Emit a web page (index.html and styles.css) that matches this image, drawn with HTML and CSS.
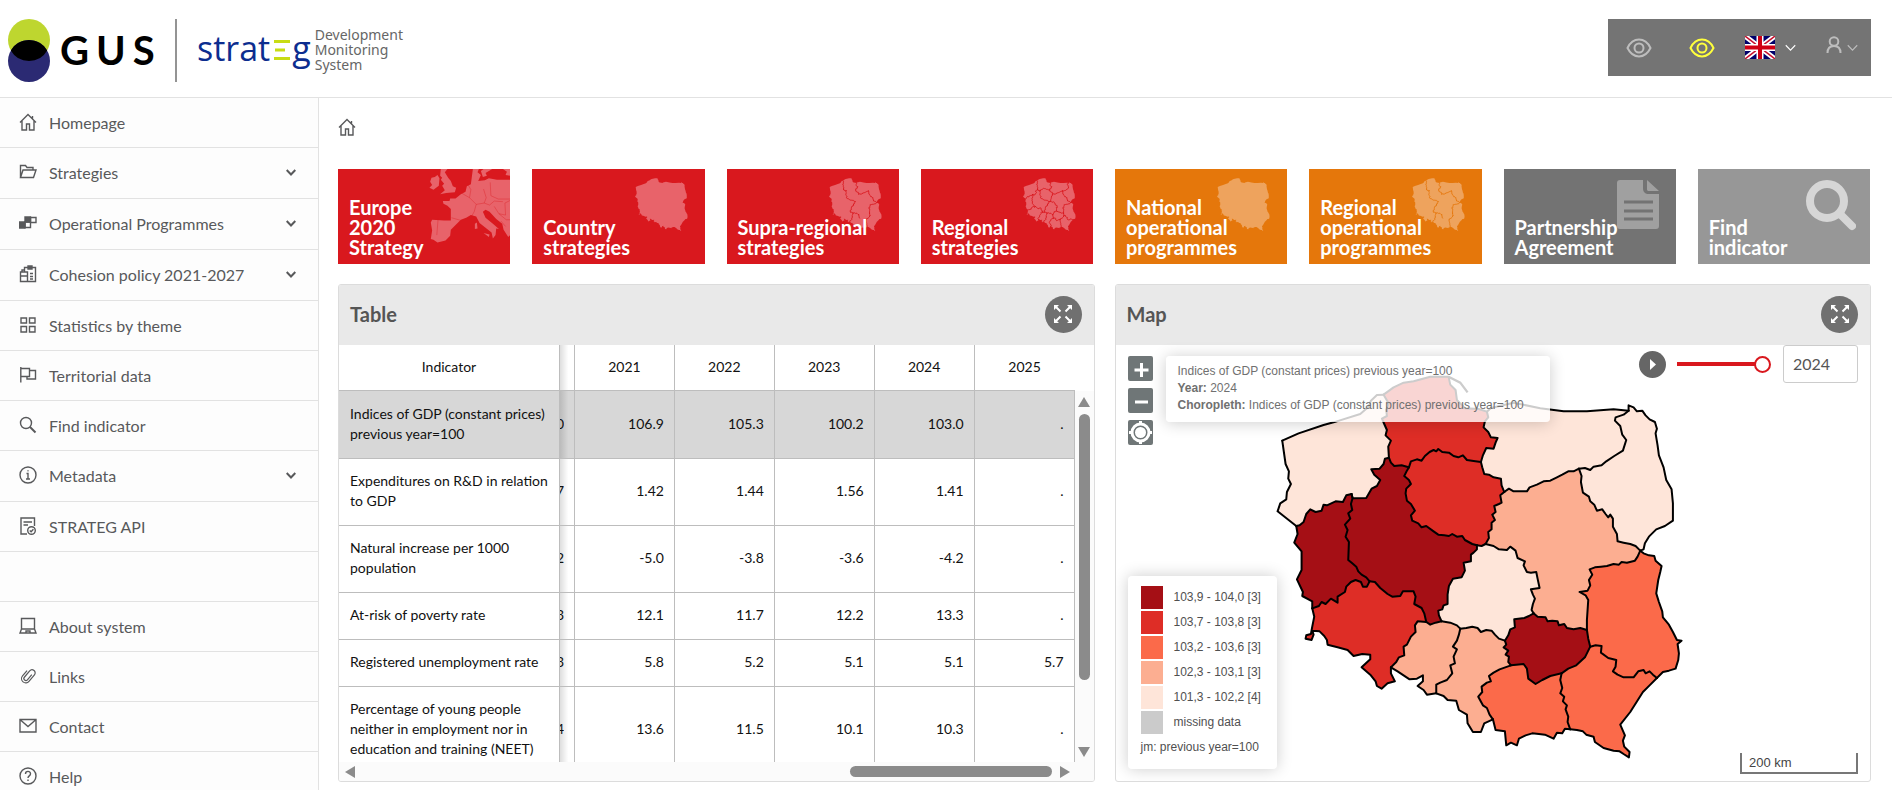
FILE: index.html
```html
<!DOCTYPE html>
<html lang="en">
<head>
<meta charset="utf-8">
<title>STRATEG</title>
<link rel="stylesheet" href="styles.css">
</head>
<body>
<svg class="defs" aria-hidden="true">
  <symbol id="i-home" viewBox="0 0 18 18"><path d="M1 9.500 9 1.500l8 8M3 8v9h4.500v-6h3v6H15V8M13.500 3v3"/></symbol>
  <symbol id="i-chev" viewBox="0 0 10 7"><path d="m.7 1 4.300 4.500L9.300 1"/></symbol>
  <symbol id="i-eye" viewBox="0 0 26 20"><path d="M1.500 10C7-1.200 19-1.200 24.500 10 19 21.200 7 21.200 1.500 10z"/><circle cx="13" cy="10" r="4.500"/></symbol>
  <symbol id="i-expand" viewBox="0 0 20 20"><path d="m2 2 5.500 5.500M18 2l-5.500 5.500M2 18l5.500-5.500M18 18l-5.500-5.500"/><path class="tip" d="M1 1h5L1 6zM19 1v5l-5-5zM1 19v-5l5 5zM19 19h-5l5-5z"/></symbol>
</svg>
<div class="app">
  <header class="header">
    <a class="brand" href="#">
      <svg class="brand-mark" viewBox="0 0 42 64" role="img" aria-label="GUS">
        <circle cx="21" cy="21" r="21" fill="#bed62f"/><circle cx="21" cy="42" r="21" fill="#2b2a73"/>
        <path d="M2.800 31.500a21 21 0 0 1 36.400 0 21 21 0 0 1-36.400 0z" fill="#000"/>
      </svg>
      <span class="gus"><span>G</span><span>U</span><span>S</span></span>
      <span class="brand-line"></span>
      <span class="strateg">strat<svg class="bars" viewBox="0 0 16 20" aria-hidden="true"><path d="M0 1.500h16M1 10h10M0 18.500h16" stroke="#c8dc14" stroke-width="3"/></svg>g</span>
      <span class="tagline">Development<br>Monitoring<br>System</span>
    </a>
    <div class="tools">
      <button class="tool" aria-label="Standard view"><svg class="eye"><use href="#i-eye"/></svg></button>
      <button class="tool tool-contrast" aria-label="High contrast"><svg class="eye"><use href="#i-eye"/></svg></button>
      <button class="tool tool-lang" aria-label="Language">
        <svg class="flag" viewBox="0 0 30 23"><path fill="#00006b" d="M0 0h30v23H0z"/><path d="m0 0 30 23M30 0 0 23" stroke="#fff" stroke-width="5"/><path d="m0 0 30 23M30 0 0 23" stroke="#c8102e" stroke-width="1.500"/><path d="M15 0v23M0 11.500h30" stroke="#fff" stroke-width="7"/><path d="M15 0v23M0 11.500h30" stroke="#d00014" stroke-width="4"/></svg>
        <svg class="chev-thin"><use href="#i-chev"/></svg>
      </button>
      <button class="tool tool-user" aria-label="Account">
        <svg class="user" viewBox="0 0 16 18"><circle cx="8" cy="5.500" r="4.300"/><path d="M1.500 17c0-4.500 2.500-7 6.500-7s6.500 2.500 6.500 7"/></svg>
        <svg class="chev-thin"><use href="#i-chev"/></svg>
      </button>
    </div>
  </header>
  <div class="body">
    <nav class="sidebar">
      <a class="item" href="#"><svg class="ico"><use href="#i-home"/></svg><span>Homepage</span></a>
      <a class="item item-sub" href="#"><svg class="ico" viewBox="0 0 18 18"><path d="M1.500 14.500v-12h5l1.500 2h6v2.500M1.500 14.500l2.500-7.500h13l-2.500 7.500z"/></svg><span>Strategies</span><svg class="chev"><use href="#i-chev"/></svg></a>
      <a class="item item-sub" href="#"><svg class="ico" viewBox="0 0 18 18"><path fill="currentColor" d="M.500 8h5.500v6H.500zM6 3h5.500v5H6z"/><path d="M11.500 3.500h5.500v5h-5.500zM6 8h5.500v5.500H6z"/></svg><span>Operational Programmes</span><svg class="chev"><use href="#i-chev"/></svg></a>
      <a class="item item-sub" href="#"><svg class="ico" viewBox="0 0 18 18"><path d="M5.500 7V2.500h11v14H1.500V7h7v9.500M1.500 11h7M9 4h4V1H9zM3 7V5h2.500M11 8.500h3M11 11.500h3M11 14h3"/></svg><span>Cohesion policy 2021-2027</span><svg class="chev"><use href="#i-chev"/></svg></a>
      <a class="item" href="#"><svg class="ico" viewBox="0 0 18 18"><path d="M2 2h5.500v5H2zM10.500 2H16v5h-5.500zM2 10.500h5.500v5.500H2zM10.500 10.500H16v5.500h-5.500z"/></svg><span>Statistics by theme</span></a>
      <a class="item" href="#"><svg class="ico" viewBox="0 0 18 18"><path d="M1.800 1v15.500M1.800 2.500h8.700v8H1.800M10.500 4.500h6v8.500H8v-2.500"/></svg><span>Territorial data</span></a>
      <a class="item" href="#"><svg class="ico" viewBox="0 0 18 18"><circle cx="7" cy="7" r="5.500"/><path d="m11 11 5.500 5.500" stroke-width="2"/></svg><span>Find indicator</span></a>
      <a class="item item-sub" href="#"><svg class="ico" viewBox="0 0 18 18"><circle cx="9" cy="9" r="8"/><path d="M7.500 7.500H9V13M7 13h4M8.500 4.800h1"/></svg><span>Metadata</span><svg class="chev"><use href="#i-chev"/></svg></a>
      <a class="item" href="#"><svg class="ico" viewBox="0 0 18 18"><path d="M8 17H2V1h13.500v8M4.500 5H13M4.500 8H9"/><circle cx="12.500" cy="13.500" r="3.800"/><path d="m10.800 13.500 1.300 1.300 2.300-2.500"/></svg><span>STRATEG API</span></a>
      <div class="item item-gap"></div>
      <a class="item" href="#"><svg class="ico" viewBox="0 0 18 18"><path d="M2.500 12.500v-11h13v11M2.500 12 1 16h16l-1.500-4zM7 16v-2h4v2"/></svg><span>About system</span></a>
      <a class="item" href="#"><svg class="ico" viewBox="0 0 18 18"><g transform="rotate(40 9 9)" stroke-width="1.200"><path d="M4.800 5.500v7a4.200 4.200 0 0 0 8.400 0V4a3.100 3.100 0 0 0-6.200 0v8.300a2 2 0 0 0 4 0V5.500"/></g></svg><span>Links</span></a>
      <a class="item" href="#"><svg class="ico" viewBox="0 0 18 18"><path d="M1 2.500h16v12.500H1zM1.500 3 9 9.500 16.500 3"/></svg><span>Contact</span></a>
      <a class="item" href="#"><svg class="ico" viewBox="0 0 18 18"><circle cx="9" cy="9" r="8"/><path d="M6.500 7c0-3.500 5-3.300 5-.300C11.500 9 9 8.700 9 11M9 12.500V14"/></svg><span>Help</span></a>
    </nav>
    <main class="main">
      <a class="crumb" href="#" aria-label="Homepage"><svg class="ico"><use href="#i-home"/></svg></a>
      <div class="tiles">
        <a class="tile red" href="#">
          <svg class="art art-full" viewBox="0 0 516 285" preserveAspectRatio="xMaxYMin slice">
            <g fill="#e8636a"><path d="M280 26l10-2 8-6 6 10-2 22-16 12-12-6 8-8-6-10zM308 0h20l-8 10 10 16 8 10 6 16 10 4-4 14-26 2-18 4 14-12-8-14 6-6-10-12 4-6-6-6z"/>
            <path d="M404 0h18l-4 10 10 8-8 18 20-2 12-6 24 4 40 0v166l-6 6-14-22-4-18-18-14-20-22-12-6-8 6 8 18 22 18 18 16-8-2-2 20-8 10-4-18-18-14-18-14-10-20-16-4-14 8-16 6-12 12-18 18-2 18-14 14-24 6-12-8-8-2 4-26-4-24 4-8 36 2 20 0v-34l-10-10-12-6-2-8 20 0 2-8 16 0 16-12 14-8 4-16 12-6zM428 6l8-6h26l-20 12 4 8-12 4zM494 0h22v20l-14-2 4-10zM410 164l6-4 2 18-8 2zM436 192l18 4-2 8z"/></g>
            <path d="M370 72l24 14 20 20-6 22-8 14M414 106l24-4 16 6M388 44l10 18-4 24M436 60l8 26-6 16M456 40l2 40 22 10 36 0M454 108l14-12 26 2M468 112l14 22 20 4-2-36 16-8M482 134l22 18 12 0M300 148l-4 50M488 156l14 16M340 146l28 8" fill="none" stroke="#d9181e" stroke-width="1.500" opacity=".7"/>
          </svg><span>Europe<br>2020<br>Strategy</span></a>
        <a class="tile red" href="#"><svg class="art" data-map="plain"></svg><span>Country<br>strategies</span></a>
        <a class="tile red" href="#"><svg class="art" data-map="supra"></svg><span>Supra-regional<br>strategies</span></a>
        <a class="tile red" href="#"><svg class="art" data-map="regional"></svg><span>Regional<br>strategies</span></a>
        <a class="tile orange" href="#"><svg class="art" data-map="plain"></svg><span>National<br>operational<br>programmes</span></a>
        <a class="tile orange" href="#"><svg class="art" data-map="supra"></svg><span>Regional<br>operational<br>programmes</span></a>
        <a class="tile gray" href="#"><svg class="art" viewBox="-6 -1 53 53"><path d="M8 1h23v8c0 4 2 6 6 6h10v32a3 3 0 0 1-3 3H8a3 3 0 0 1-3-3V4a3 3 0 0 1 3-3zM35 1l12 11H37c-1.500 0-2-.500-2-2z" fill="#a0a0a0"/><path d="M12 23h29M12 32h29M12 40h29" stroke="#737373" stroke-width="3"/></svg><span>Partnership<br>Agreement</span></a>
        <a class="tile light" href="#"><svg class="art" viewBox="-2 -1 53 53"><circle cx="22" cy="22" r="17" fill="none" stroke="#d6d6d6" stroke-width="8"/><path d="m36 36 11 11" stroke="#d6d6d6" stroke-width="8" stroke-linecap="round"/></svg><span>Find<br>indicator</span></a>
      </div>
      <div class="panels">
        <section class="panel">
          <div class="panel-head"><h2>Table</h2><button class="expand" aria-label="Expand table"><svg><use href="#i-expand"/></svg></button></div>
          <div class="grid">
            <div class="viewport">
              <table class="data">
                <colgroup><col class="c-name"><col class="c-cut"><col><col><col><col><col></colgroup>
                <thead><tr><th>Indicator</th><th></th><th>2021</th><th>2022</th><th>2023</th><th>2024</th><th>2025</th></tr></thead>
                <tbody>
                  <tr class="active"><th>Indices of GDP (constant prices) previous year=100</th><td class="cut"><div>0</div></td><td>106.9</td><td>105.3</td><td>100.2</td><td>103.0</td><td>.</td></tr>
                  <tr><th>Expenditures on R&amp;D in relation to GDP</th><td class="cut"><div>7</div></td><td>1.42</td><td>1.44</td><td>1.56</td><td>1.41</td><td>.</td></tr>
                  <tr><th>Natural increase per 1000 population</th><td class="cut"><div>2</div></td><td>-5.0</td><td>-3.8</td><td>-3.6</td><td>-4.2</td><td>.</td></tr>
                  <tr><th>At-risk of poverty rate</th><td class="cut"><div>3</div></td><td>12.1</td><td>11.7</td><td>12.2</td><td>13.3</td><td>.</td></tr>
                  <tr><th>Registered unemployment rate</th><td class="cut"><div>3</div></td><td>5.8</td><td>5.2</td><td>5.1</td><td>5.1</td><td>5.7</td></tr>
                  <tr><th>Percentage of young people neither in employment nor in education and training (NEET)</th><td class="cut"><div>4</div></td><td>13.6</td><td>11.5</td><td>10.1</td><td>10.3</td><td>.</td></tr>
                </tbody>
              </table>
            </div>
            <div class="vbar"><svg viewBox="0 0 12 10"><path d="M6 0l6 10H0z"/></svg><div class="vtrack"><i></i></div><svg viewBox="0 0 12 10"><path d="M6 10l6-10H0z"/></svg></div>
            <div class="hbar"><svg viewBox="0 0 10 12"><path d="M0 6l10-6v12z"/></svg><div class="htrack"><i></i></div><svg viewBox="0 0 10 12"><path d="M10 6L0 0v12z"/></svg></div>
          </div>
        </section>
        <section class="panel">
          <div class="panel-head"><h2>Map</h2><button class="expand" aria-label="Expand map"><svg><use href="#i-expand"/></svg></button></div>
          <div class="map">
            <svg class="map-canvas" data-map="choropleth" role="img" aria-label="Map of voivodeships"></svg>
            <div class="zoom">
              <button aria-label="Zoom in"><svg viewBox="0 0 25 25"><path d="M6.500 14h14M13.500 7v14"/></svg></button>
              <button aria-label="Zoom out"><svg viewBox="0 0 25 25"><path d="M7 14h13"/></svg></button>
              <button aria-label="Reset view"><svg viewBox="0 0 25 25"><circle cx="12.500" cy="12.500" r="8.500"/><circle cx="12.500" cy="12.500" r="4" fill="#fff"/><path d="M12.500 1v4M12.500 20v4M1 12.500h4M20 12.500h4"/></svg></button>
            </div>
            <div class="tip-box">Indices of GDP (constant prices) previous year=100<br><b>Year:</b> 2024<br><b>Choropleth:</b> Indices of GDP (constant prices) previous year=100</div>
            <div class="timeline">
              <button class="play" aria-label="Play"><svg viewBox="0 0 27 27"><path d="M11 8l6 5.500-6 5.500z" fill="#fff"/></svg></button>
              <input class="slider" type="range" min="2010" max="2024" value="2024" aria-label="Year">
              <input class="year" type="text" value="2024" aria-label="Selected year">
            </div>
            <div class="legend">
              <div class="leg"><i class="k1"></i>103,9 - 104,0 [3]</div>
              <div class="leg"><i class="k2"></i>103,7 - 103,8 [3]</div>
              <div class="leg"><i class="k3"></i>103,2 - 103,6 [3]</div>
              <div class="leg"><i class="k4"></i>102,3 - 103,1 [3]</div>
              <div class="leg"><i class="k5"></i>101,3 - 102,2 [4]</div>
              <div class="leg"><i class="k0"></i>missing data</div>
              <div class="leg">jm: previous year=100</div>
            </div>
            <div class="scale">200 km</div>
          </div>
        </section>
      </div>
    </main>
  </div>
</div>
<script src="map.js"></script>
</body>
</html>
```
FILE: styles.css
```css
* { box-sizing: border-box; }
body { margin: 0; font-family: Lato, "Liberation Sans", sans-serif; color: #58595b; background: #fff; }
button { border: 0; background: none; padding: 0; cursor: pointer; font: inherit; }
a { color: inherit; text-decoration: none; }
.defs { position: absolute; width: 0; height: 0; }

.app { display: flex; flex-direction: column; height: 100vh; overflow: hidden; }
.header { display: flex; flex: none; justify-content: space-between; align-items: center; height: 98px; padding: 0 21px 2px 8px; border-bottom: 1px solid #e2e2e2; }
.brand { display: flex; align-items: center; }
.brand-mark { width: 42px; height: 64px; margin-top: 6px; }
.gus { display: flex; gap: 7px; margin-top: 5px; margin-left: 10px; width: 107px; font: 700 40px/60px Lato, sans-serif; color: #000; }
.brand-line { width: 2px; height: 63px; margin-top: 6px; margin-left: 8px; background: #949494; }
.strateg { display: flex; align-items: center; margin-left: 20px; font: 500 34px/60px "Open Sans", "Noto Sans", sans-serif; color: #0c2d8f; }
.bars { width: 16px; height: 20px; margin: 4px 2px 0 4px; }
.tagline { margin: 3px 0 0 4px; font: 400 14px/15px "Noto Sans", sans-serif; color: #666; }
.tools { display: flex; align-items: center; height: 57px; padding: 0 13px 0 18px; background: #747474; color: #bdbdbd; }
.tool { display: flex; align-items: center; color: inherit; }
.tool svg { fill: none; stroke: currentColor; stroke-width: 2; }
.eye { width: 26px; height: 20px; }
.tool-contrast { margin-left: 37px; color: #ffff3c; }
.tool-lang { margin-left: 30px; gap: 10px; color: #fff; }
.tool .flag { width: 30px; height: 23px; stroke: none; }
.tool-user { margin-left: 30px; gap: 5px; }
.tool svg.user { width: 16px; height: 18px; margin-bottom: 5px; }
.tool svg.chev-thin { width: 11px; height: 8px; stroke-width: 1; }

.body { display: flex; flex: 1; min-height: 0; }
.sidebar { flex: none; width: 319px; overflow: hidden; border-right: 1px solid #e2e2e2; background: #fdfdfd; }
.item { display: flex; align-items: center; height: 50px; padding: 0 22px 0 19px; border-bottom: 1px solid #e2e2e2; font-size: 16px; line-height: 20px; }
.item-sub { height: 51px; }
.ico { flex: none; width: 18px; height: 18px; margin-right: 12px; fill: none; stroke: currentColor; stroke-width: 1.400; }
.item .ico { margin-bottom: 2px; }
.chev { width: 10px; height: 7px; margin: 0 0 2px auto; fill: none; stroke: currentColor; stroke-width: 2; }

.main { display: flex; flex: 1; flex-direction: column; min-width: 0; padding: 20px 21px 8px 19px; }
.crumb { display: block; height: 51px; }
.tiles { display: grid; grid-template-columns: repeat(8, 1fr); gap: 22px; margin-right: 1px; }
.tile { position: relative; display: flex; align-items: flex-end; height: 95px; padding: 0 11px 7px; font-size: 20px; font-weight: 700; line-height: 20px; color: #fff; overflow: hidden; }
.tile span { position: relative; }
.art { position: absolute; top: 9px; right: 17px; width: 53px; height: 53px; }
.light .art { right: 14px; }
.art-full { inset: 0; width: 100%; height: 100%; }
.red { background: #d9181e; --land: #e8636a; }
.orange { background: #e5770b; --land: #eea35d; }
.gray { background: #737373; }
.light { background: #979797; }

.panels { display: grid; grid-template-columns: 1fr 1fr; flex: 1; gap: 20px; min-height: 0; margin-top: 20px; }
.panel { display: flex; flex-direction: column; min-width: 0; min-height: 0; border: 1px solid #dcdcdc; border-radius: 3px; overflow: hidden; }
.panel-head { display: flex; flex: none; align-items: center; justify-content: space-between; height: 60px; padding: 0 12px 2px 11px; background: #e9e9e9; }
.panel-head h2 { margin: 0; font-size: 20px; line-height: 24px; font-weight: 700; color: #555; }
.expand { display: flex; align-items: center; justify-content: center; width: 37px; height: 37px; border-radius: 50%; background: #707070; }
.expand svg { width: 20px; height: 20px; stroke: #fff; stroke-width: 2; }
.tip { fill: #fff; stroke: none; }

.grid { display: grid; flex: 1; grid-template: minmax(0, 1fr) 19px / minmax(0, 1fr) 19px; min-height: 0; }
.viewport { overflow: hidden; }
.data { width: 100%; table-layout: fixed; border-collapse: separate; border-spacing: 0; font-size: 14px; line-height: 20px; color: #111; }
.c-name { width: 221px; }
.c-cut { width: 15px; }
.data th, .data td { padding: 12px 10px 14px; border: solid #bdbdbd; border-width: 0 1px 1px 0; font-weight: 400; text-align: right; }
.data thead th { height: 46px; padding: 0 0 2px; text-align: center; }
.data thead th:last-child { border-right: 0; }
.data tbody th { padding-right: 6px; padding-left: 11px; text-align: left; }
.data .active > * { height: 68px; background: #d7d7d7; }
.data tr > :nth-child(2) { background-image: linear-gradient(90deg, rgba(0, 0, 0, .13), rgba(0, 0, 0, 0) 60%); }
.data .cut { padding-left: 0; }
.cut div { display: flex; justify-content: flex-end; overflow: hidden; }
.vbar { display: flex; flex-direction: column; align-items: center; padding: 52px 0 5px; background: linear-gradient(#fff 46px, #fbfbfb 46px); }
.vbar svg { width: 12px; height: 10px; }
.vtrack { flex: 1; padding: 7px 0 0; }
.vtrack i { display: block; width: 11px; height: 80%; border-radius: 6px; background: #8b8b8b; }
.hbar { display: flex; grid-column: 1 / -1; align-items: center; padding: 0 24px 0 6px; background: #fbfbfb; }
.hbar svg { width: 10px; height: 12px; }
.hbar svg, .vbar svg { fill: #8b8b8b; }
.htrack { display: flex; flex: 1; justify-content: flex-end; padding-right: 8px; }
.htrack i { width: 29%; height: 11px; border-radius: 6px; background: #8b8b8b; }

.map { position: relative; flex: 1; min-height: 0; font: 12px/17px "Liberation Sans", Arial, sans-serif; }
.map-canvas { position: absolute; inset: 0; width: 100%; height: 100%; }
.zoom { position: absolute; top: 11px; left: 12px; display: grid; gap: 7px; }
.zoom button { width: 25px; height: 25px; border-radius: 2px; background: #6f7677; }
.zoom svg { display: block; fill: none; stroke: #fff; stroke-width: 3; }
.tip-box { position: absolute; top: 11px; left: 50px; padding: 7px 26px 8px 12px; border-radius: 4px; background: rgba(255, 255, 255, .8); box-shadow: 0 1px 16px rgba(0, 0, 0, .2); color: #707070; white-space: nowrap; }
.timeline { position: absolute; top: 0; right: 12px; display: flex; align-items: center; }
.play { width: 27px; height: 27px; border-radius: 50%; background: #666; }
.play svg { display: block; }
.slider { appearance: none; width: 94px; height: 16px; margin: 0 12px 0 11px; background: linear-gradient(#d9181e, #d9181e) 0 50% / 84px 4px no-repeat; }
.slider::-webkit-slider-thumb { appearance: none; width: 17px; height: 17px; border: 2px solid #d9181e; border-radius: 50%; background: #fff; }
.year { width: 75px; height: 38px; padding: 0 9px 2px; border: 1px solid #ccc; border-radius: 3px; font: 16px Lato, sans-serif; color: #555; }
.legend { position: absolute; bottom: 12px; left: 12px; padding: 9px 16px 9px 13px; border-radius: 4px; background: #fff; box-shadow: 0 0 16px rgba(0, 0, 0, .2); color: #505050; }
.leg { display: flex; align-items: center; gap: 11px; height: 25px; white-space: nowrap; }
.leg i { width: 22px; height: 23px; }
.k1 { background: #a50f15; }
.k2 { background: #de2d26; }
.k3 { background: #fb6a4a; }
.k4 { background: #fcae91; }
.k5 { background: #fee5d9; }
.k0 { background: #cbcbcb; }
.scale { position: absolute; right: 12px; bottom: 7px; width: 118px; padding: 0 7px; border: solid #777; border-width: 0 2px 2px; line-height: 19px; font-size: 13px; color: #444; }
```
FILE: map.js
```js
// Borders between voivodeships, stored once and joined into closed regions.
const arcs = {
  zpCoast: "66,182 115,160 190,135 220,127 300,102 325,80 332,62 350,45 370,44",
  zpPom: "370,44 385,70 378,90 380,108 365,116 372,132 380,150 376,166 392,182 384,200 386,233",
  pomCoast: "370,44 400,22 430,8 460,4 510,-10 565,-10 570,14 586,30 590,60 600,70 615,85 655,87 680,95",
  pomWlk: "386,233 392,248 402,258 424,256 440,260 446,262",
  pomKuj: "446,262 452,244 470,238 484,242 494,228 508,216 520,210 528,214 534,207 546,216 566,218 580,228 594,232 608,226 620,240 640,243 662,246",
  pomWar: "662,246 668,226 678,204 700,206 706,188 712,174 692,172 684,156 670,142 674,124 684,112 680,95",
  zpWlk: "386,233 374,236 370,252 358,266 333,268 342,284 360,300 350,318 334,326 318,354 277,355 274,342",
  zpLub: "274,342 258,346 248,366 226,364 200,376 190,374 184,392 166,396 150,388 138,402 130,426 118,436 108,438",
  zpWest: "108,438 52,394 60,370 78,358 80,336 92,312 84,296 86,274 76,252 66,182",
  lubWlk: "274,342 277,355 272,372 276,390 264,400 270,416 254,434 262,450 256,470 266,486 264,540 276,550 288,560 294,574 304,584 318,592 328,604",
  lubDol: "328,604 320,620 308,620 302,606 286,600 272,606 258,620 254,636 232,650 232,668 212,656 196,672 184,666 176,678 156,685",
  lubWest: "108,438 112,462 102,488 124,514 124,570 110,598 128,636 126,648 156,664 156,685",
  dolWlk: "328,604 344,606 360,624 382,642 396,650 420,648 428,634 460,634 466,650 462,672 484,684 492,700 498,726",
  wlkOpo: "498,726 510,734 526,728 544,724",
  wlkLod: "544,724 536,706 534,692 546,688 550,676 562,672 562,644 566,618 578,596 604,592 614,572 610,548 632,544 632,524 640,518 650,508 650,496",
  wlkKuj: "446,262 440,272 432,288 446,300 452,312 438,326 436,340 440,362 452,372 464,392 452,406 456,422 474,430 484,442 498,438 520,454 534,464 552,466 566,468 576,462 590,470 606,468 614,480 636,492 650,496",
  kujLod: "650,496 664,498 676,492",
  kujMaz: "676,492 686,474 684,456 694,448 694,428 704,420 696,404 706,396 702,378 716,372 724,368 720,346 732,336",
  kujWar: "662,246 666,262 672,282 686,284 700,292 722,296 724,316 732,336",
  warMaz: "732,336 746,326 760,334 800,334 808,322 830,314 850,304 870,302 890,292 906,284 924,274 940,274 956,266",
  warPod: "956,266 974,264 990,270 1000,260 1024,256 1038,244 1062,228 1088,212 1098,180 1086,164 1080,138 1064,122 1066,112 1090,104 1105,92",
  warNorth: "680,95 692,84 760,68 840,85 910,94 980,94 1060,88 1105,92",
  podEast: "1105,92 1105,76 1120,82 1130,94 1146,92 1156,106 1168,118 1184,126 1190,146 1186,160 1192,196 1196,226 1210,262 1218,300 1234,328 1238,370 1238,422 1214,438 1188,448 1166,470 1154,490 1150,508 1140,512",
  mazPod: "956,266 964,288 962,306 968,338 986,350 990,364 1002,374 1010,392 1026,388 1036,402 1044,412 1050,404 1058,416 1058,440 1070,462 1072,484 1090,488 1110,492 1126,498 1140,512",
  mazLbl: "1140,512 1132,530 1124,542 1100,548 1084,546 1076,554 1060,552 1040,558 1022,560 1004,562 988,568 996,584 986,600 990,616 982,632 958,636 976,646 984,660 982,690 980,720 980,750",
  lblEast: "1140,512 1150,520 1166,526 1182,528 1186,542 1204,558 1200,576 1194,600 1188,640 1196,666 1206,694 1208,712 1226,734 1238,756 1250,780 1264,782 1252,792 1256,820 1254,840 1246,866 1226,872 1208,876 1190,894",
  lblSwi: "980,750 984,776 990,800",
  lblPdk: "990,800 1006,796 1024,798 1022,818 1044,834 1068,840 1066,860 1058,874 1072,884 1090,892 1120,892 1134,874 1150,870 1156,880 1168,874 1178,884 1190,894",
  mazSwi: "820,700 832,710 856,712 862,724 876,722 892,724 896,736 912,732 920,744 940,748 960,744 980,750",
  lodMaz: "676,492 700,498 716,508 740,510 750,500 766,512 772,534 794,544 790,556 800,576 812,578 828,576 832,596 838,624 812,628 818,644 824,656 818,672 814,690 820,700",
  lodSwi: "820,700 806,708 792,714 762,718 764,742 750,748 744,766 734,782",
  lodSla: "734,782 716,776 704,764 694,752 678,750 662,756 652,744 636,740 618,744 600,746",
  lodOpo: "600,746 590,736 570,728 544,724",
  opoSla: "600,746 596,764 590,782 578,800 590,808 580,830 584,850 570,856 576,880 560,900 540,908 528,914 528,940",
  opoSouth: "528,940 500,944 490,930 472,918 488,904 488,886 470,896 448,898 430,886 412,874 392,862",
  dolOpo: "498,726 472,724 464,736 466,756 452,770 440,794 430,800 432,826 416,832 408,846 392,862",
  dolSouth: "156,685 162,710 156,740 152,762 138,766 136,776 154,780 160,764 156,752 178,754 192,768 200,780 202,794 232,802 262,810 280,828 306,822 330,824 330,838 304,862 330,884 346,904 350,918 364,926 382,910 404,904 392,880 392,862",
  slaSouth: "528,940 550,948 562,960 588,962 596,990 620,1004 622,1030 638,1056 662,1056 672,1030 698,1018",
  slaMal: "698,1018 688,1004 680,984 668,976 654,950 666,936 664,920 680,908 692,904 686,888 700,878 718,868 752,856",
  slaSwi: "752,856 744,846 746,830 736,824 744,812 730,802 738,794 734,782",
  swiMal: "752,856 768,854 790,852 800,866 804,896 826,912 846,900 870,888 904,880",
  swiPdk: "904,880 924,866 948,856 974,832 990,800",
  malPdk: "904,880 900,900 906,924 900,940 912,950 908,964 920,976 916,988 924,1010 922,1026 930,1048",
  malSouth: "698,1018 706,1050 734,1054 738,1096 752,1088 770,1096 776,1076 796,1066 816,1060 836,1062 854,1064 880,1076 890,1058 906,1060 914,1046 930,1048",
  pdkEast: "930,1048 950,1050 968,1054 978,1064 1000,1070 1004,1086 1030,1104 1060,1112 1078,1114 1090,1122 1106,1132 1108,1116 1092,1100 1088,1082 1094,1066 1080,1034 1110,996 1148,936 1168,916 1190,894"
};
const regions = [
  ["#fee5d9", "zpCoast zpPom zpWlk zpLub zpWest"],
  ["#de2d26", "pomCoast -pomWar -pomKuj -pomWlk -zpPom"],
  ["#fee5d9", "warNorth -warPod -warMaz -kujWar pomWar"],
  ["#fee5d9", "podEast -mazPod warPod"],
  ["#a50f15", "zpLub lubWest -lubDol -lubWlk"],
  ["#a50f15", "zpWlk lubWlk dolWlk wlkOpo wlkLod -wlkKuj -pomWlk"],
  ["#de2d26", "pomKuj kujWar -kujMaz -kujLod -wlkKuj"],
  ["#fcae91", "warMaz mazPod mazLbl -mazSwi -lodMaz kujMaz"],
  ["#fee5d9", "kujLod lodMaz lodSwi lodSla lodOpo wlkLod"],
  ["#fb6a4a", "lblEast -lblPdk -lblSwi -mazLbl"],
  ["#de2d26", "dolWlk dolOpo -dolSouth -lubDol"],
  ["#fcae91", "wlkOpo -lodOpo opoSla opoSouth -dolOpo"],
  ["#fcae91", "-lodSla -slaSwi -slaMal -slaSouth -opoSla"],
  ["#a50f15", "mazSwi lblSwi -swiPdk -swiMal slaSwi -lodSwi"],
  ["#fb6a4a", "swiMal malPdk -malSouth slaMal"],
  ["#fb6a4a", "swiPdk lblPdk -pdkEast -malPdk"]
];
const outline = "zpCoast pomCoast warNorth podEast lblEast -pdkEast -malSouth -slaSouth opoSouth -dolSouth -lubWest zpWest";
const supraLines = "zpPom pomWlk wlkKuj wlkLod lodOpo lodSla slaSwi pomWar kujWar warMaz mazPod mazLbl lblSwi swiPdk malPdk opoSla".split(" ");
const isOuter = name => /Coast|North|East|West|South/.test(name);

function ring(refs) {
  return "M" + refs.split(" ").map(r => r[0] === "-" ? arcs[r.slice(1)].split(" ").reverse().join(" ") : arcs[r]).join(" ") + "z";
}
document.querySelectorAll("[data-map]").forEach(svg => {
  const kind = svg.dataset.map;
  const big = kind === "choropleth";
  const all = Object.keys(arcs);
  const lines = big ? all : kind === "regional" ? all.filter(n => !isOuter(n)) : kind === "supra" ? supraLines : [];
  svg.setAttribute("viewBox", big ? "-432 -105 2262 1308" : "50 -14 1216 1148");
  if (!big) svg.setAttribute("preserveAspectRatio", "none");
  const line = big ? "#000" : getComputedStyle(svg.parentElement).backgroundColor;
  const land = big
    ? regions.map(([fill, refs]) => `<path d="${ring(refs)}" fill="${fill}"/>`).join("")
    : `<path d="${ring(outline.replace("opoSouth", "-slaSouth").replace("-slaSouth -slaSouth", "-slaSouth opoSouth"))}" fill="var(--land)"/>`;
  svg.innerHTML = land +
    lines.map(k => `<path d="M${arcs[k]}" fill="none" stroke="${line}" stroke-width="${big ? 6 : 20}" stroke-linejoin="round" stroke-linecap="round"/>`).join("") +
    (big ? '<path d="M565,-10 600,8 622,37" fill="none" stroke="#000" stroke-width="7"/>' : "");
});
```
